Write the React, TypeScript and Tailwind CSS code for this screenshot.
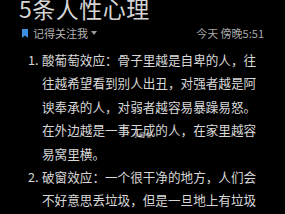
const font = { fontFamily: '"Noto Sans CJK SC", "Noto Sans", sans-serif' };

const items = [
  {
    n: "1.",
    lines: [
      "酸葡萄效应：骨子里越是自卑的人，往",
      "往越希望看到别人出丑，对强者越是阿",
      "谀奉承的人，对弱者越容易暴躁易怒。",
      "在外边越是一事无成的人，在家里越容",
      "易窝里横。",
    ],
  },
  {
    n: "2.",
    lines: [
      "破窗效应：一个很干净的地方，人们会",
      "不好意思丢垃圾，但是一旦地上有垃圾",
    ],
  },
];

export default function App() {
  return (
    <div
      className="relative w-[285px] h-[214px] overflow-hidden bg-black"
      style={font}
    >
      {/* Title */}
      <div className="pl-[19px] h-[17px] text-[23px] leading-[17px] text-[#d4d4d4] tracking-[0.5px]">
        5条人性心理
      </div>

      {/* Author row */}
      <div className="mt-[9px] h-[14px] flex items-center justify-between pl-[22px] pr-[21px] text-[11px] leading-[14px]">
        <div className="flex items-center text-[#b4b4b4]">
          <svg width="6" height="9" viewBox="0 0 6 9" className="mr-[5px]">
            <path d="M0 0H6V9L3 6.6L0 9Z" fill="#3d8fe0" />
          </svg>
          <span>记得关注我</span>
          <svg width="6" height="4" viewBox="0 0 6 4" className="ml-[3px]">
            <path d="M0 0H6L3 4Z" fill="#9a9a9a" />
          </svg>
        </div>
        <div className="text-[#a8a8a8]">今天 傍晚5:51</div>
      </div>

      {/* Body */}
      <div className="mt-[8px] text-[12.6px] leading-[23.4px] text-[#d8d8d8]">
        {items.map((it) => (
          <div key={it.n} className="flex">
            <div className="w-[42px] pl-[28px] shrink-0">{it.n}</div>
            <div className="flex flex-col">
              {it.lines.map((l, i) => (
                <span key={i} className="whitespace-nowrap">
                  {l}
                </span>
              ))}
            </div>
          </div>
        ))}
      </div>

      {/* Watermark */}
      <div className="absolute left-[133px] top-[131px] text-[6px] leading-[8px] text-white/80">
        小红书
      </div>
    </div>
  );
}
